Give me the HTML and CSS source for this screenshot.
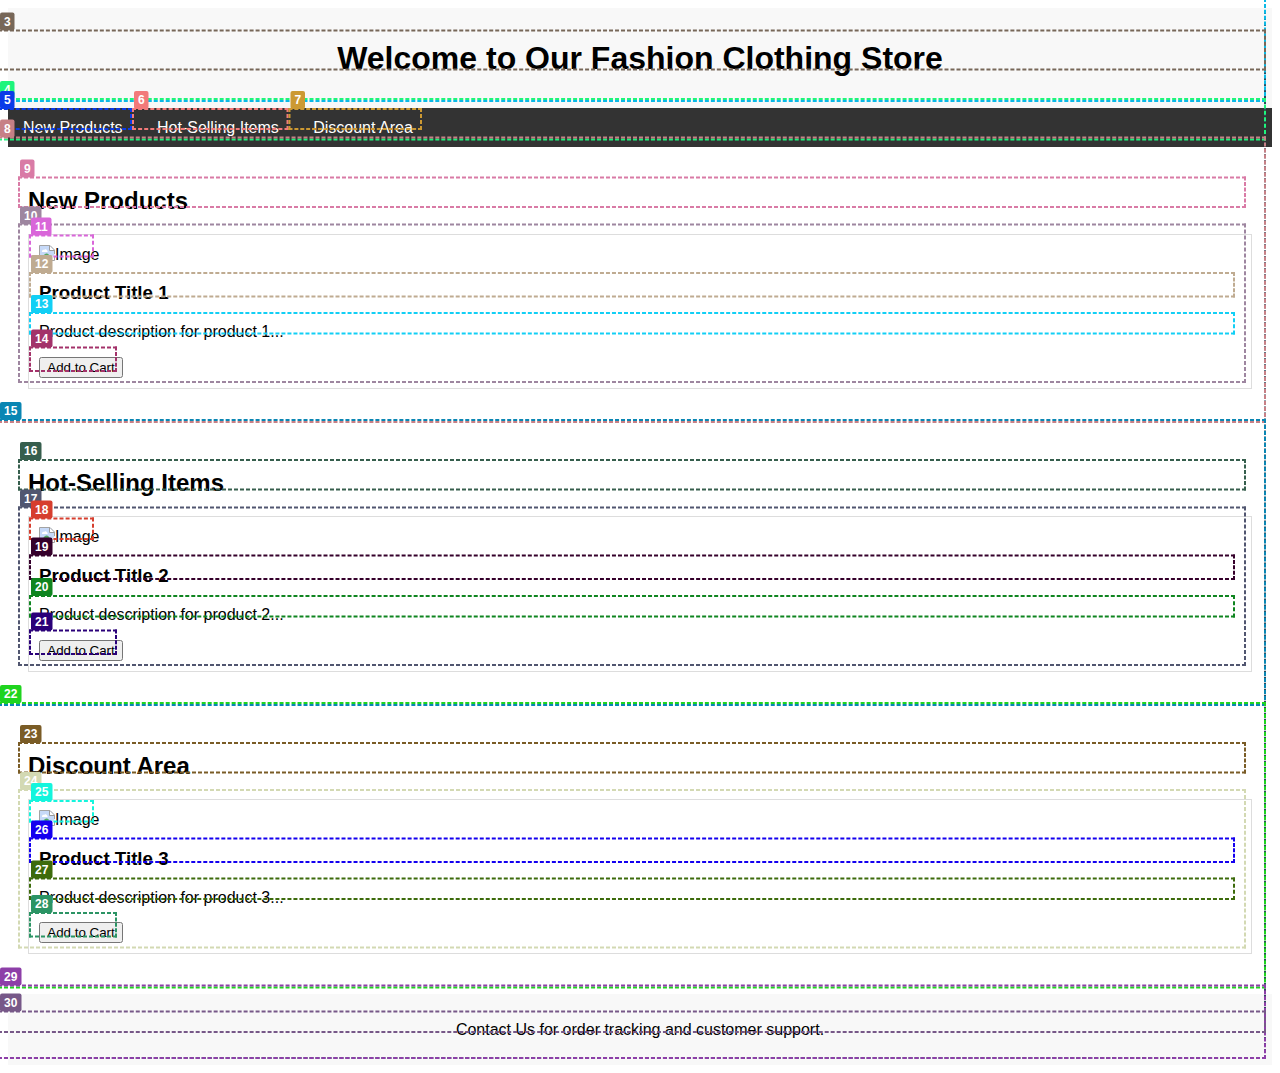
FILE: index.html
```html
<!DOCTYPE html>
<html lang="en">
<head>
<meta charset="utf-8">
<title>Fashion Clothing Store</title>
<link rel="stylesheet" href="styles.css">
</head>
<body>
<svg class="symbols" aria-hidden="true">
  <symbol id="broken" viewBox="0 0 16 16">
    <path d="M.5 .5h10.500l4.500 4.500v5l-4 2.500-3 3h-8z" fill="#c6d9f8"/>
    <path d="M1.500 14l4-4.500c1.500-1.500 3.500-1 4.500.5l1 1.500-3.500 3.500h-6z" fill="#52a860"/>
    <path d="M3 6.500c0-1.500 1.500-2 2-1.500 1-1.500 3-.5 3 .5 1 0 1 1.500 0 1.500H3z" fill="#fff"/>
    <path d="M10.500 .5v5h5" fill="#fff" stroke="#9b9b9b"/>
    <path d="M7 15.500H.5V.5h10.500l4.500 4.500v4M12 15.500h3.500v-3.500" fill="none" stroke="#a3a3a3"/>
  </symbol>
</svg>
<header class="header"><h1>Welcome to Our Fashion Clothing Store</h1></header>
<nav class="nav">
  <a>New Products</a>
  <a>Hot-Selling Items</a>
  <a>Discount Area</a>
</nav>
<section class="section">
  <h2>New Products</h2>
  <div class="card">
    <div class="image"><svg><use href="#broken"/></svg>Image</div>
    <h3>Product Title 1</h3>
    <p>Product description for product 1...</p>
    <button>Add to Cart</button>
  </div>
</section>
<section class="section">
  <h2>Hot-Selling Items</h2>
  <div class="card">
    <div class="image"><svg><use href="#broken"/></svg>Image</div>
    <h3>Product Title 2</h3>
    <p>Product description for product 2...</p>
    <button>Add to Cart</button>
  </div>
</section>
<section class="section">
  <h2>Discount Area</h2>
  <div class="card">
    <div class="image"><svg><use href="#broken"/></svg>Image</div>
    <h3>Product Title 3</h3>
    <p>Product description for product 3...</p>
    <button>Add to Cart</button>
  </div>
</section>
<footer class="footer"><p>Contact Us for order tracking and customer support.</p></footer>
<div class="overlay" id="overlay"></div>
<script src="overlay.js"></script>
</body>
</html>
```
FILE: styles.css
```css
body {
  margin: 8px;
  font-family: "Liberation Sans", Arial, sans-serif;
  font-size: 16px;
  line-height: 18.4px;
  color: #000;
  background: #fff;
}
.symbols { display: none; }
.header {
  height: 80px;
  padding: 10px;
  background: #f8f8f8;
  text-align: center;
}
.header h1 { margin: 0; padding-top: 22.4px; font-size: 32px; line-height: 37px; }
.nav {
  display: flex;
  gap: 4.4px;
  padding: 11px 0 9.4px;
  background: #333;
  color: #fff;
}
.nav a { padding: 0 15px; }
.section { padding: 20px; height: 242.6px; }
.section h2 { margin: 19.9px 0; font-size: 24px; line-height: 27.2px; }
.card {
  padding: 10px;
  border: 1px solid #ddd;
}
.image { display: flex; height: 19px; line-height: 19px; }
.image svg { width: 16px; height: 16px; }
.card h3 { margin: 18.7px 0; font-size: 18.72px; line-height: 21.3px; }
.card p { margin: 0 0 15.4px; line-height: 19.4px; }
.card button {
  display: block;
  width: 84px;
  height: 21px;
  padding: 0;
  border: 1px solid #767676;
  border-radius: 2.5px;
  background: #efefef;
  color: #000;
  font: 13.333px "Liberation Sans", Arial, sans-serif;
}
.footer {
  margin-top: -.6px;
  padding: 10px;
  background: #f8f8f8;
  text-align: center;
}
.footer p { margin: 17px 0 15.6px; }

/* Outline layer: laid out in half-pixel units, then halved */
.overlay {
  position: absolute;
  top: 0;
  left: 0;
  width: 2560px;
  height: 2146px;
  overflow: hidden;
  transform: scale(.5);
  transform-origin: 0 0;
  pointer-events: none;
}
.box { position: absolute; box-sizing: border-box; border: 4px dashed; }
.tag {
  position: absolute;
  top: -38px;
  left: 0;
  padding: 4px 8px;
  border-radius: 4px;
  font: bold 24px/28px "Liberation Sans", Arial, sans-serif;
}
.tag span { color: #fff; }
```
FILE: overlay.js
```js
// id, left, top, right, bottom, colour
const boxes = [
  [1, -2, -2, 1266, 1059, '#2e4a5c'],
  [2, -2, -2, 1266, 102, '#0bb9e6'],
  [3, -2, 29.5, 1266, 70.5, '#776758'],
  [4, -2, 98, 1266, 140.5, '#1ef57c'],
  [5, -2, 108, 132, 130, '#0b3be8'],
  [6, 132, 108, 288.5, 130, '#f27a7a'],
  [7, 288.5, 108, 422, 130, '#cc9933'],
  [8, -2, 136.5, 1266, 423, '#c78086'],
  [9, 18, 176.5, 1246, 208, '#d97ba6'],
  [10, 18, 223.5, 1246, 383, '#9e86a0'],
  [11, 29, 234.5, 94, 257.5, '#d966d9'],
  [12, 29, 272, 1235, 297.5, '#bfab91'],
  [13, 29, 312, 1235, 334.5, '#12cff5'],
  [14, 29, 346.5, 117, 372, '#a3326a'],
  [15, -2, 419, 1266, 706, '#0a86b3'],
  [16, 18, 459, 1246, 490.5, '#365e4d'],
  [17, 18, 506.5, 1246, 666, '#515670'],
  [18, 29, 517.5, 94, 540, '#d63e2e'],
  [19, 29, 554.5, 1235, 580, '#35002b'],
  [20, 29, 595, 1235, 617.5, '#0f8520'],
  [21, 29, 629.5, 117, 655, '#2a0079'],
  [22, -2, 702, 1266, 988.5, '#1fd41f'],
  [23, 18, 742, 1246, 773.5, '#7a5c26'],
  [24, 18, 789, 1246, 948.5, '#d3d9b3'],
  [25, 29, 800, 94, 822.5, '#14f5dd'],
  [26, 29, 837.5, 1235, 863, '#1400ef'],
  [27, 29, 877.5, 1235, 900, '#3d6b0c'],
  [28, 29, 912, 117, 937.5, '#2b9464'],
  [29, -2, 984.5, 1266, 1059, '#8d3fa8'],
  [30, -2, 1010.5, 1266, 1033, '#775888']
];
document.getElementById('overlay').innerHTML = boxes.map(([id, l, t, r, b, c]) =>
  `<div class="box" style="left:${l * 2}px;top:${t * 2}px;width:${(r - l) * 2}px;height:${(b - t) * 2}px;border-color:${c}">` +
  (id > 2 ? `<div class="tag" style="background:${c}"><span>${id}</span></div>` : '') + '</div>'
).join('');
```
